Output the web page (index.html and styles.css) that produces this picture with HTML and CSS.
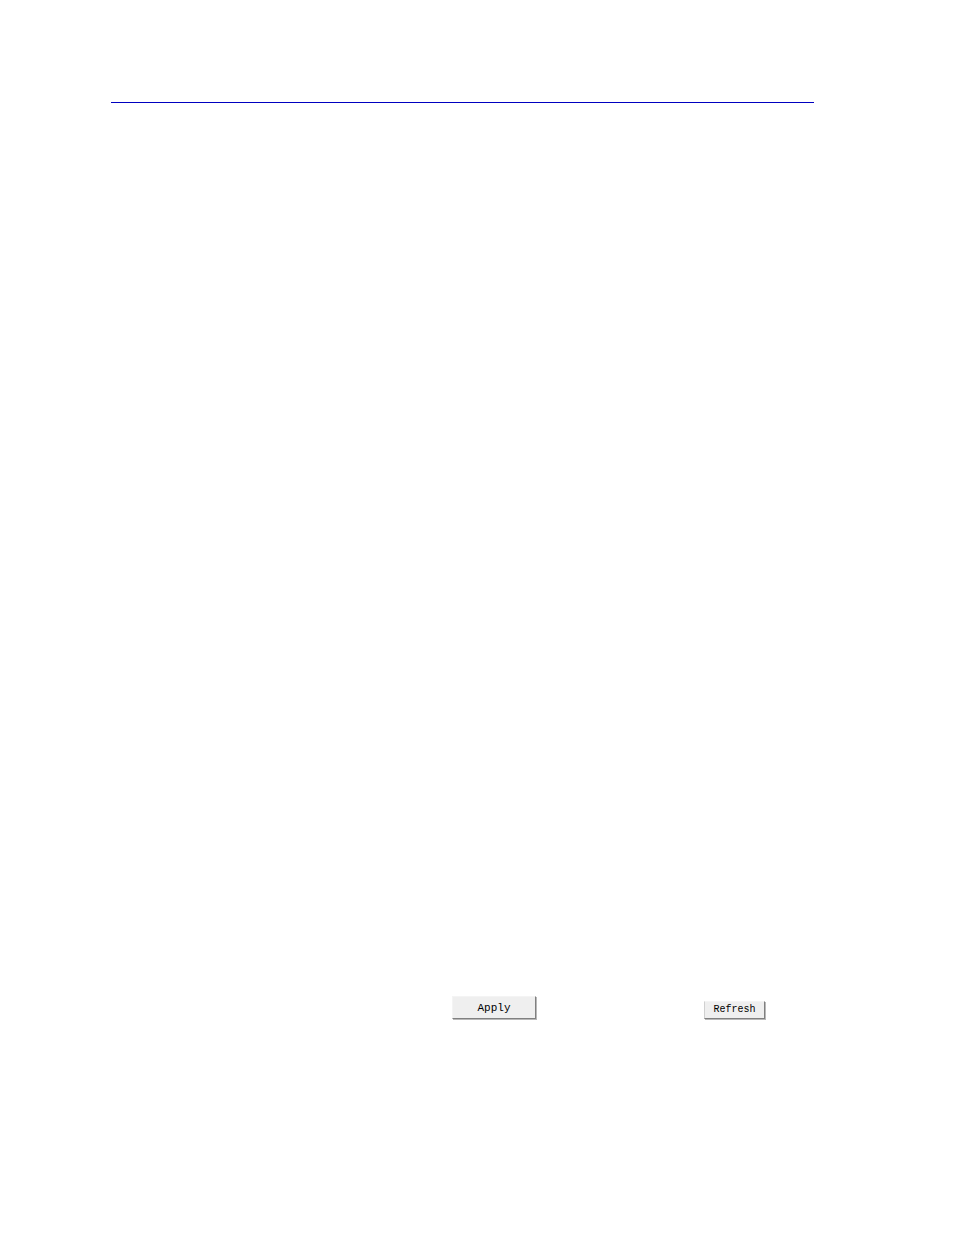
FILE: index.html
```html
<!DOCTYPE html>
<html lang="en">
<head>
<meta charset="utf-8">
<meta name="viewport" content="width=device-width, initial-scale=1">
<title>Apply and Refresh</title>
<link rel="stylesheet" href="styles.css">
</head>
<body>
<main class="page">
  <hr class="rule">
  <div class="actions">
    <button type="button" class="button button-large">Apply</button>
    <button type="button" class="button button-small">Refresh</button>
  </div>
</main>
</body>
</html>
```

FILE: styles.css
```css
* {
  box-sizing: border-box;
}

body {
  margin: 0;
  background: #fff;
}

.page {
  display: flex;
  flex-direction: column;
  min-height: 100vh;
  padding: 102px 140px 216px 111px;
}

.rule {
  width: 100%;
  height: 1px;
  margin: 0;
  border: 0;
  background: #0000c0;
}

.actions {
  display: flex;
  justify-content: flex-end;
  align-items: flex-end;
  gap: 168px;
  margin-top: auto;
  padding-right: 49px;
}

.button {
  margin: 0;
  padding: 0;
  border: 1px solid;
  border-color: #f4f4f4 #808080 #808080 #f4f4f4;
  background: #efefef;
  box-shadow: 1px 1px 0 #b8b8b8;
  color: #000;
  font-family: "Liberation Mono", monospace;
  text-align: center;
}

.button-large {
  width: 84px;
  height: 23px;
  font-size: 11px;
  line-height: 20px;
}

.button-small {
  width: 61px;
  height: 18px;
  border-left-color: #d0d0d0;
  font-size: 10px;
  line-height: 14px;
}
```
